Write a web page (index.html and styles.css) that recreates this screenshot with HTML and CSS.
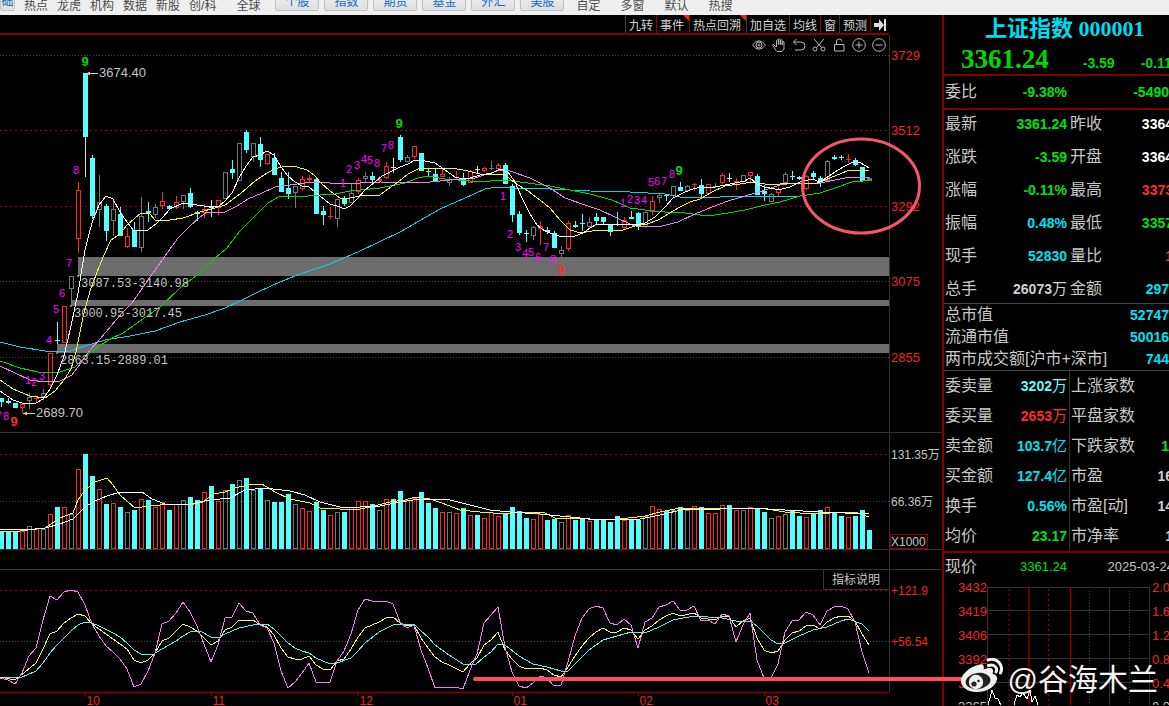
FILE: index.html
```html
<!DOCTYPE html>
<html lang="zh-CN">
<head>
<meta charset="utf-8">
<title>上证指数 000001</title>
<link rel="stylesheet" href="styles.css">
</head>
<body>
<nav class="topbar">
  <div class="links">
    <button class="tab tab-first" type="button">础</button>
    <a href="#">热点</a><a href="#">龙虎</a><a href="#">机构</a><a href="#">数据</a><a href="#">新股</a><a href="#">创/科</a>
  </div>
  <div class="links world"><a href="#">全球</a></div>
  <div class="tabs">
    <button class="tab" type="button">个股</button><button class="tab" type="button">指数</button><button class="tab" type="button">期货</button><button class="tab" type="button">基金</button><button class="tab" type="button">外汇</button><button class="tab" type="button">美股</button>
  </div>
  <div class="links wide"><a href="#">自定</a><a href="#">多窗</a><a href="#">默认</a><a href="#">热搜</a></div>
</nav>

<div class="app">
  <main class="charts">
    <div class="toolbar">
      <button type="button">九转</button>
      <button type="button" class="red flag">事件</button>
      <button type="button" class="red flag">热点回溯</button>
      <button type="button">加自选</button>
      <button type="button">均线</button>
      <button type="button" class="red">窗</button>
      <button type="button">预测</button>
      <button type="button" class="red" aria-label="收起"><svg width="12" height="12" viewBox="0 0 12 12"><path d="M0 4h5V0l5 6-5 6V8H0zM10 0h2v12h-2z" fill="#ddd"/></svg></button>
    </div>
    <section class="panel">
      <svg id="price" class="plot" viewBox="0 35 942 398"></svg>
      <div class="tools">
        <button type="button" aria-label="显示"><svg viewBox="0 0 14 14"><path d="M.5 7Q7-1.500 13.500 7 7 15.500.5 7z"/><circle cx="7" cy="7" r="3"/><circle cx="7" cy="7" r="1"/></svg></button>
        <button type="button" aria-label="拖动"><svg viewBox="0 0 14 14"><path d="M4 9 1.500 6.500Q.5 6 .8 7.500L4 12.500 5 13.500h5L12 11V4q-1-1.500-1.800 0V7 2.500q-1-1.500-1.900 0V6.500 1.500q-1-1.500-1.900 0V6.500 2.500q-1-1.500-1.900 0V9"/></svg></button>
        <button type="button" aria-label="撤销"><svg viewBox="0 0 14 14"><path d="M4.500 1 1.500 4l3 3M1.500 4h7.500a3.800 3.800 0 0 1 0 8H3"/></svg></button>
        <button type="button" aria-label="剪切"><svg viewBox="0 0 14 14"><circle cx="3" cy="11" r="2"/><circle cx="11" cy="11" r="2"/><path d="M2 1l7.500 8.500M12 1 4.500 9.500"/></svg></button>
        <button type="button" aria-label="锁定"><svg viewBox="0 0 14 14"><path d="M2.500 6.500h9.500v6.500H2.500zM4.500 6.500V3q0-2 3-2 2.500 0 2.500 2.500"/></svg></button>
        <button type="button" aria-label="放大"><svg viewBox="0 0 14 14"><circle cx="7" cy="7" r="6.300"/><path d="M3.500 7h7M7 3.500v7"/></svg></button>
        <button type="button" aria-label="缩小"><svg viewBox="0 0 14 14"><circle cx="7" cy="7" r="6.300"/><path d="M3.500 7h7"/></svg></button>
      </div>
    </section>
    <section class="panel"><svg id="volume" class="plot" viewBox="0 433 942 136"></svg></section>
    <section class="panel"><svg id="osc" class="plot" viewBox="0 569 942 137"></svg></section>
  </main>

  <aside class="quote">
    <header class="head">
      <h1>上证指数 000001</h1>
      <div class="last"><strong>3361.24</strong><span>-3.59</span><span>-0.11</span></div>
    </header>
    <div class="row ratio"><div class="cell"><span>委比</span><b class="down">-9.38%</b></div><div class="cell"><b class="down push">-5490</b></div></div>
    <div class="block spaced">
      <div class="row"><div class="cell"><span>最新</span><b class="down">3361.24</b></div><div class="cell"><span>昨收</span><b class="flat cut">3364</b></div></div>
      <div class="row"><div class="cell"><span>涨跌</span><b class="down">-3.59</b></div><div class="cell"><span>开盘</span><b class="flat cut">3364</b></div></div>
      <div class="row"><div class="cell"><span>涨幅</span><b class="down">-0.11%</b></div><div class="cell"><span>最高</span><b class="up cut">3373</b></div></div>
      <div class="row"><div class="cell"><span>振幅</span><b class="info">0.48%</b></div><div class="cell"><span>最低</span><b class="down cut">3357</b></div></div>
      <div class="row"><div class="cell"><span>现手</span><b class="info">52830</b></div><div class="cell"><span>量比</span><b class="up cut">1</b></div></div>
      <div class="row"><div class="cell"><span>总手</span><b class="plain">26073<i>万</i></b></div><div class="cell"><span>金额</span><b class="info">297</b></div></div>
    </div>
    <div class="block totals">
      <div class="row"><span>总市值</span><b class="info">52747</b></div>
      <div class="row"><span>流通市值</span><b class="info">50016</b></div>
      <div class="row"><span>两市成交额[沪市+深市]</span><b class="info">744</b></div>
    </div>
    <div class="block split">
      <div class="row"><div class="cell"><span>委卖量</span><b class="pale">3202<i>万</i></b></div><div class="cell"><span>上涨家数</span></div></div>
      <div class="row"><div class="cell"><span>委买量</span><b class="up">2653<i>万</i></b></div><div class="cell"><span>平盘家数</span></div></div>
      <div class="row"><div class="cell"><span>卖金额</span><b class="info">103.7<i>亿</i></b></div><div class="cell"><span>下跌家数</span><b class="down">1</b></div></div>
      <div class="row"><div class="cell"><span>买金额</span><b class="info">127.4<i>亿</i></b></div><div class="cell"><span>市盈</span><b class="plain cut">16</b></div></div>
      <div class="row"><div class="cell"><span>换手</span><b class="info">0.56%</b></div><div class="cell"><span>市盈[动]</span><b class="plain cut">14</b></div></div>
      <div class="row"><div class="cell"><span>均价</span><b class="down">23.17</b></div><div class="cell"><span>市净率</span><b class="plain cut">1</b></div></div>
    </div>
    <div class="row now"><div class="cell"><span>现价</span><span class="down num">3361.24</span></div><div class="cell"><span class="num push">2025-03-24</span></div></div>
    <svg id="mini" class="plot" viewBox="944 582 225 124"></svg>
  </aside>

  <div class="stroke"></div>
  <div class="watermark">
    <svg width="42" height="36" viewBox="0 0 42 36">
      <path d="M17 7C21 5 24 7 22.500 11.500 29 8.500 34 10 31.500 15.500 36 17 37 20 35.500 23 33 30 24 34.500 15 34 6 33.500 0 29 0 23 0 16 9 9 17 7z" fill="#f1f1f1"/>
      <ellipse cx="17" cy="23" rx="12.500" ry="8" fill="#222" transform="rotate(-8 17 23)"/>
      <circle cx="15" cy="24" r="7.200" fill="#f1f1f1"/>
      <circle cx="13" cy="26" r="2.600" fill="#222"/><circle cx="17.500" cy="23" r="1.300" fill="#222"/>
      <path d="M27 2C36-1 43 7 39.500 15M27.500 7.500C33 5.500 37 10 35 14" fill="none" stroke="#f1f1f1" stroke-width="3" stroke-linecap="round"/>
    </svg>
    <span>@谷海木兰</span>
  </div>
</div>
<script src="chart.js"></script>
</body>
</html>
```
FILE: styles.css
```css
* { box-sizing: border-box; }
body {
  margin: 0;
  background: #000;
  color: #c8c8c8;
  font-family: "Liberation Sans", "Noto Sans CJK SC", sans-serif;
  overflow: hidden;
}
button { font: inherit; color: inherit; background: none; border: 0; padding: 0; margin: 0; }
a { color: inherit; text-decoration: none; }
i { font-style: normal; }

.topbar {
  display: flex;
  align-items: flex-end;
  height: 15px;
  overflow: hidden;
  background: #efefef;
  color: #4c4c4c;
  font-size: 12px;
  line-height: 16px;
  white-space: nowrap;
}
.links { display: flex; align-items: flex-end; gap: 9px; height: 18px; padding-bottom: 1px; }
.world { margin-left: 20px; }
.tabs { display: flex; gap: 5px; margin-left: 15px; padding-bottom: 4px; }
.wide { gap: 20px; margin-left: 12px; }
.tab {
  width: 44px;
  height: 22px;
  padding-top: 4px;
  border: 1px solid #c2c2c2;
  border-radius: 2px;
  background: linear-gradient(#f4f4f4, #dedede);
  color: #1769c7;
}
.tab-first { width: 15px; margin-bottom: 3px; overflow: hidden; direction: rtl; }

.app { position: relative; display: flex; }
.charts { flex: 1; min-width: 0; }
.toolbar {
  display: flex;
  justify-content: flex-end;
  height: 20px;
  margin-right: 53px;
  border-bottom: 2px solid #800000;
  font-size: 12px;
  line-height: 20px;
}
.toolbar button { position: relative; padding: 1px 3px 0; border-left: 1px solid #3a3a3a; color: #d4d4d4; white-space: nowrap; }
.toolbar .red { border-left: 1px solid #900000; }
.toolbar .flag { padding-right: 5px; }
.flag::after {
  content: "";
  position: absolute;
  top: 0;
  right: 0;
  border: 3px solid transparent;
  border-top-color: #f22;
  border-right-color: #f22;
}
.toolbar svg { display: block; }
.panel { position: relative; }
.plot { display: block; width: 100%; height: auto; }
.plot polyline { shape-rendering: crispEdges; }
.tools { position: absolute; top: 0; right: 53px; display: flex; }
.tools button { display: grid; place-items: center; width: 20px; height: 20px; }
.tools svg { width: 14px; height: 14px; fill: none; stroke: #b8b8b8; stroke-width: 1; }

.plot text { font-family: "Liberation Sans", "Noto Sans CJK SC", sans-serif; font-size: 12px; fill: #c4c4c4; }
.plot text.axis { font-size: 13px; fill: #f02525; }
.plot text.axis-s { fill: #f02525; }
.plot text.tag { font-size: 13px; }
.plot text.gap { font-family: "Liberation Mono", monospace; }
.plot text.seq { font-size: 11px; fill: #f0f; text-anchor: middle; }
.plot text.nine { font-size: 13px; font-weight: bold; fill: #00d800; text-anchor: middle; }
.plot text.nine-red { font-size: 13px; font-weight: bold; fill: #ff2c2c; text-anchor: middle; }

.quote { flex: 0 0 227px; min-width: 0; overflow: hidden; border-left: 2px solid #800000; font-size: 16px; white-space: nowrap; }
.head { height: 61px; border-bottom: 2px solid #800000; }
h1 {
  margin: 0;
  padding-left: 41px;
  font: bold 22px/28px "Liberation Serif", "Noto Sans CJK SC", serif;
  color: #00dcf0;
}
.last { display: flex; align-items: baseline; gap: 34px; padding-left: 17px; font-size: 14px; font-weight: bold; line-height: 32px; color: #00d800; }
.last strong { font: bold 27px/32px "Liberation Serif", serif; }
.last span + span { margin-left: -8px; }
.row { display: flex; justify-content: space-between; line-height: 30px; padding-left: 1px; }
.cell { display: flex; flex: 1; min-width: 0; justify-content: space-between; }
.cell:first-child { flex: 0 0 122px; }
.cell + .cell { padding-left: 3px; }
.row b { font-size: 14px; }
.row b i { font-size: 15px; font-weight: normal; }
.ratio { line-height: 32px; border-bottom: 2px solid #800000; }
.block { border-bottom: 1px solid #444; }
.spaced { display: grid; gap: 5px; }
.spaced .row { line-height: 28px; }
.totals .row { line-height: 22px; }
.split { border-bottom: 2px solid #800000; }
.split .cell + .cell { margin-left: 2px; padding-left: 1px; border-left: 1px solid #333; }
.now { line-height: 28px; }
.now .num { font-size: 13px; }
.push { margin-left: auto; }
.now .push { margin-right: -5px; }
.cut { margin-right: -4px; }
.down { color: #00e010; }
.up { color: #ff2c2c; }
.info { color: #00e0f0; }
.pale { color: #60ffff; }
.flat { color: #fff; }
.plain { color: #d0d0d0; }

.stroke { position: absolute; left: 473px; right: 176px; bottom: 25px; height: 4px; background: #ff4d5e; border-radius: 12px 0 0 12px; }
.watermark { position: absolute; right: 11px; bottom: 4px; display: flex; align-items: flex-start; gap: 5px; color: #f4f4f4; font-size: 30px; line-height: 44px; white-space: nowrap; }
```
FILE: chart.js
```js
const NS = "http://www.w3.org/2000/svg";
const STEP = 7, FIRST = 1.5;

function add(svg, tag, attrs, text) {
  const el = document.createElementNS(NS, tag);
  for (const key in attrs) el.setAttribute(key, attrs[key]);
  if (text !== undefined) el.textContent = text;
  svg.appendChild(el);
}
function line(svg, x1, y1, x2, y2, stroke, dash, width) {
  add(svg, "line", { x1, y1, x2, y2, stroke, "stroke-dasharray": dash || "none", "stroke-width": width || 1 });
}
function curve(svg, stroke, points, width) {
  add(svg, "polyline", { points, stroke, fill: "none", "stroke-width": width || 1 });
}
function text(svg, x, y, cls, value) { add(svg, "text", { x, y, class: cls }, value); }

const GREY = "#333", RED = "#8c0000";
const COLORS = { c: "#54ffff", r: "#ff2626", g: "#777", w: "#ddd" };

/* Price: kind, body top, body bottom, high, low */
const candles = `c398,402,398,407 c401,403,398,404 c403,408,403,408 r404,408,404,413 g397,401,393,409 r398,399,396,402 g393,397,389,400
r353,385,353,387 c340,341,322,344 r306,343,306,343 g276,289,276,306 r190,239,182,253 c73,137,73,177 c158,216,155,219 g202,210,175,227
c206,231,204,241 g209,221,201,236 c214,236,207,236 r236,247,228,248 c230,247,222,247 g216,248,197,252 c211,213,202,222 g207,215,204,218
r201,206,192,209 c206,209,205,210 r202,208,196,209 g195,202,195,209 c193,207,188,208 c212,214,211,221 r209,213,204,218 w207,208,200,217
r200,208,200,215 g172,199,172,199 c169,173,160,179 g143,181,143,181 c132,150,130,153 g143,157,143,162 c144,160,137,167 r154,164,154,165
c158,175,153,175 c178,192,172,192 c188,194,172,199 g186,193,186,208 r179,189,176,191 r178,180,175,182 c179,214,178,214 c211,215,206,225
r216,217,207,219 g199,219,199,227 c199,204,196,206 g193,203,183,203 r180,192,178,194 g176,179,172,182 c176,180,172,183 r179,181,176,183
r166,178,162,179 w167,168,158,173 c137,160,135,162 g157,162,155,162 r146,157,146,159 c153,171,153,171 c171,172,168,176 c174,181,169,182
r174,177,169,177 g179,183,177,186 r177,178,171,180 c179,185,173,186 r171,183,170,183 w169,170,166,173 r168,171,167,172 g168,169,161,170
r165,169,163,170 c165,184,163,184 c186,215,184,222 c214,233,211,235 c233,234,230,242 g227,236,226,240 r226,229,221,245 c230,232,227,234
c233,248,231,248 g250,254,246,257 r223,249,221,251 c225,227,221,228 c223,224,214,231 g222,227,217,228 c217,221,213,225 c217,222,217,225
c225,232,224,236 c224,225,212,226 r220,228,217,229 c217,219,211,219 c213,227,212,230 g212,227,212,228 r201,212,196,215 g195,198,194,203
c195,196,194,201 g186,196,186,197 c187,191,182,191 g186,191,185,192 r184,185,183,191 c185,194,179,197 r184,194,184,195 g186,187,183,188
r175,183,173,184 w178,179,173,182 r181,183,178,190 g175,182,175,182 r172,176,172,182 c176,195,174,195 c191,194,185,201 g194,202,193,202
r189,193,187,197 g174,183,172,183 c176,177,171,180 c177,179,176,180 r176,189,175,190 c173,177,171,179 c178,183,176,187 g161,181,160,182
c157,159,155,160 c157,158,155,160 r159,160,154,163 c160,165,158,166 c167,181,167,182 g178,180,177,181`.split(/\s+/);

const price = document.getElementById("price");
[[55.5, 0], [130.5, 1], [206.5, 1], [281.5, 0], [357.5, 0]].forEach(([y, red]) =>
  line(price, 0, y, 889, y, red ? "#a00000" : "#444", red ? "2 3" : "1 2"));
line(price, 889.5, 35, 889.5, 433, GREY);
line(price, 0, 432.5, 942, 432.5, GREY);
[[78, 257, 19], [72, 300, 6], [57, 344, 9]].forEach(([x, y, h]) =>
  add(price, "rect", { x, y, width: 889 - x, height: h, fill: "#6d6d6d" }));
candles.forEach((item, i) => {
  const kind = item[0], color = COLORS[kind], x = FIRST + i * STEP;
  const [top, bottom, high, low] = item.slice(1).split(",").map(Number);
  if (bottom - top <= 1 || kind === "c") {
    line(price, x, high, x, low, bottom - top > 60 ? "#ddd" : color);
    add(price, "rect", { x: x - 2.5, y: top, width: 5, height: Math.max(1, bottom - top), fill: color });
  } else {
    line(price, x, high, x, top, color);
    line(price, x, bottom, x, low, color);
    add(price, "rect", { x: x - 2, y: top + 0.5, width: 4, height: bottom - top - 1, fill: "none", stroke: color });
  }
});
curve(price, "#00d5e8", "0,342 20,347 45,351 70,351 85,346 105,340 130,336 155,331 180,322 205,315 225,308 240,301 260,291 280,282 300,274 330,264 360,251 400,232 440,209 465,198 485,189 497,187 510,188 550,189 590,191 630,192 665,194 680,197 720,197 800,196 869,196");
curve(price, "#00d800", "0,361 20,368 38,372 60,372 75,367 85,357 95,349 110,339 123,333 140,321 160,307 180,288 200,273 215,258 226,249 240,231 256,215 268,203 280,196 297,197 320,195 335,194 350,191 380,188 405,183 418,178 428,176 445,179 470,181 490,181 505,180 520,182 550,186 570,190 590,194 612,200 630,208 645,210 665,212 685,213 700,215 715,215 728,213 745,210 765,205 780,202 800,196 820,193 838,187 852,182 872,180");
curve(price, "#f080f0", "0,366 15,373 30,380 45,382 60,381 72,375 78,367 90,350 100,339 111,326 122,313 132,303 141,290 155,270 165,256 178,238 190,226 200,217 207,212 225,212 237,206 248,199 262,193 275,187 290,185 305,183 320,182 340,184 380,182 420,183 450,180 475,178 500,170 510,171 530,178 550,188 565,198 585,205 600,210 615,217 632,225 647,227 662,226 678,222 695,214 712,207 728,201 745,196 765,190 780,185 795,183 820,183 835,180 850,177 869,177");
curve(price, "#f4f430", "0,380 13,389 30,396 45,398 55,391 64,380 71,369 76,352 83,317 90,291 97,272 104,255 111,240 120,234 127,225 134,219 141,213 150,214 155,220 170,220 183,218 200,212 215,208 225,205 240,194 255,181 267,173 275,169 285,166 297,167 307,170 314,175 321,183 330,191 340,198 350,198 365,195 380,195 388,189 398,182 408,174 418,169 430,168 452,168 468,171 480,174 505,175 515,183 528,191 540,200 550,208 560,220 570,230 581,233 597,230 620,231 635,226 647,224 658,220 670,213 680,207 690,202 700,199 712,192 725,186 740,184 752,182 765,184 780,184 800,183 815,184 830,178 847,171 869,170");
curve(price, "#fff", "0,391 13,400 22,403 30,404 36,403 43,399 50,389 57,375 64,356 71,326 78,293 85,250 90,230 93,220 99,205 106,196 113,199 120,212 127,222 134,231 141,230 148,230 156,224 162,218 170,209 183,203 204,206 218,207 225,201 232,193 239,178 246,166 253,157 260,155 267,151 274,155 281,167 288,176 295,182 302,186 309,187 320,196 330,204 340,207 344,209 350,206 357,199 365,190 375,182 382,176 390,172 400,167 408,164 415,160 425,161 435,163 445,170 455,177 463,179 470,178 480,175 492,173 500,169 508,172 515,182 522,198 530,214 537,225 545,231 553,234 562,237 575,236 583,233 590,228 597,224 610,225 625,224 635,225 645,223 655,217 665,207 673,198 683,193 690,190 700,187 715,187 730,184 745,181 750,178 757,184 764,187 775,189 782,189 790,187 800,182 812,179 820,182 829,176 838,170 847,165 855,161 861,163 869,168");

[[6, 420, 8], [28, 384, 1], [34, 386, 2], [42, 380, 3], [49, 344, 4], [56, 313, 5], [62, 297, 6], [69, 267, 7], [76, 174, 8],
 [343, 187, 1], [349, 173, 2], [357, 169, 3], [364, 163, 4], [370, 164, 5], [377, 167, 8], [384, 152, 7], [391, 149, 8],
 [503, 200, 1], [510, 238, 2], [518, 251, 3], [525, 257, 4], [531, 256, 5], [538, 261, 6], [546, 251, 7], [553, 263, 8],
 [623, 207, 1], [630, 203, 2], [637, 204, 3], [644, 204, 4], [651, 186, 5], [657, 185, 6], [664, 185, 7], [672, 178, 8]
].forEach(([x, y, n]) => text(price, x, y, "seq", n));
[[85, 66], [399, 128], [679, 175]].forEach(([x, y]) => text(price, x, y, "nine", 9));
[[14, 426], [561, 274]].forEach(([x, y]) => text(price, x, y, "nine-red", 9));
text(price, 0, 419, "seq", "*");

text(price, 81, 287, "gap", "3087.53-3140.98");
text(price, 74, 317, "gap", "3000.95-3017.45");
text(price, 60, 364, "gap", "2863.15-2889.01");
text(price, 99, 77, "tag", "3674.40");
text(price, 36, 417, "tag", "2689.70");
[[86, 73.5], [23, 413.5]].forEach(([x, y]) => {
  line(price, x, y, x + 12, y, "#ccc");
  add(price, "path", { d: `M${x} ${y}l4-2v4z`, fill: "#ccc" });
});
[[78, 276], [71, 306], [57, 353]].forEach(([cx, cy]) => add(price, "circle", { cx, cy, r: 1, fill: "#f88" }));
[[60, 3729], [135, 3512], [211, 3292], [286, 3075], [362, 2855]].forEach(([y, v]) => text(price, 891, y, "axis", v));
add(price, "ellipse", { cx: 861, cy: 186, rx: 58.5, ry: 47, fill: "none", stroke: "#f4566a", "stroke-width": 3 });

/* Volume: kind and bar height */
const bars = `c18 c18 c18 r18 g23 r21 g20 r35 c42 r42 g35 r80 c95 c73 r60 c45 r46 c42 g37 c39 r50 c49 r42 r47 c39 r45 g49 c52 c49 r57 c63 r48 g59 c65 g69 c71 g59 c60 g49 c47 c47 c55 g45 r41 r38 c47 c39 r34 g37 c37 r42 r48 r48 c45 g39 r50 c50 c58 g49 r51 c57 c46 c41 r37 g37 r36 c41 r34 c34 r31 r37 r33 c36 c42 c38 c31 r30 r35 c29 c30 g27 r34 c29 c30 r28 c30 c29 c27 c33 r29 c30 c29 g33 r43 r40 c38 g39 c42 g39 r43 c42 r36 r36 r44 c44 r39 g39 r42 c41 c37 g31 r33 g35 c39 c33 r32 c36 c39 r42 c36 c33 r32 c33 c39 c19`.split(" ");
const volume = document.getElementById("volume");
line(volume, 0, 454.5, 889, 454.5, "#a00000", "2 3");
line(volume, 0, 501.5, 889, 501.5, "#444", "1 2");
bars.forEach((item, i) => {
  const kind = item[0], h = Number(item.slice(1)), x = FIRST + i * STEP;
  if (kind === "c") add(volume, "rect", { x: x - 2.5, y: 549 - h, width: 5, height: h, fill: COLORS.c });
  else add(volume, "rect", { x: x - 2, y: 549.5 - h, width: 4, height: h - 1, fill: "none", stroke: COLORS[kind] });
});
curve(volume, "#f4f430", "0,531 20,531 45,528 60,518 73,513 78,500 85,490 95,482 107,478 113,485 120,495 135,508 150,506 170,504 190,505 203,502 213,494 225,492 235,488 248,485 262,484 275,492 290,499 310,503 320,508 340,509 355,510 370,507 390,502 405,500 415,497 430,499 442,503 460,510 480,512 505,514 520,512 545,513 555,518 575,518 600,520 620,519 645,516 660,512 680,508 700,508 730,508 760,508 785,512 800,513 830,513 855,512 869,517");
curve(volume, "#fff", "0,529 25,530 45,528 60,524 73,519 85,507 95,501 107,496 120,492 142,492 152,499 165,504 190,504 210,500 230,498 245,490 265,488 290,491 305,495 320,502 340,507 360,507 380,506 400,502 420,499 450,500 470,505 490,510 510,512 540,514 560,516 590,519 640,519 660,515 685,509 720,509 750,508 785,510 820,512 869,514");
line(volume, 0, 549.5, 942, 549.5, GREY);
line(volume, 889.5, 433, 889.5, 569, GREY);
text(volume, 891, 459, "", "131.35万");
text(volume, 891, 506, "", "66.36万");
add(volume, "rect", { x: 890.5, y: 534.5, width: 37, height: 14, fill: "#000", stroke: "#900000" });
text(volume, 891, 546, "", "X1000");

/* Oscillator */
const osc = document.getElementById("osc");
line(osc, 0, 569.5, 942, 569.5, GREY);
line(osc, 0, 590.5, 889, 590.5, "#a00000", "2 3");
line(osc, 0, 641.5, 889, 641.5, "#444", "1 2");
line(osc, 889.5, 569, 889.5, 692, GREY);
curve(osc, "#60f0f0", "0,677 20,678 36,671 43,663 50,653 57,645 64,638 71,631 78,625 85,622 92,623 99,626 113,633 120,637 127,643 134,650 141,654 152,655 162,649 176,641 183,636 190,632 200,631 211,637 218,638 225,634 239,628 253,625 267,624 274,629 281,636 288,643 295,648 302,651 309,653 316,658 330,664 337,663 351,658 358,651 365,643 379,632 393,625 414,624 421,631 428,637 435,645 449,655 463,664 475,665 484,657 491,652 498,644 505,645 519,656 533,664 547,667 561,671 568,671 575,664 589,650 603,640 617,636 631,632 645,633 659,627 673,620 694,616 722,618 736,621 750,621 757,626 764,633 771,640 778,644 785,643 799,636 813,630 827,627 841,621 848,619 862,624 869,631");
curve(osc, "#f0f080", "0,677 15,680 25,672 36,663 43,649 50,634 57,631 64,623 71,618 78,614 85,616 92,624 106,634 120,644 127,649 134,660 141,663 148,660 155,653 162,641 169,638 176,631 183,624 190,627 197,631 204,638 211,645 218,641 225,630 232,627 239,620 246,621 253,620 260,625 267,627 274,635 281,648 288,657 295,659 302,659 309,656 316,665 323,669 330,670 337,661 344,659 351,649 358,637 365,628 372,625 379,622 386,618 393,617 400,623 407,626 414,625 421,638 428,648 435,657 442,662 449,665 463,672 470,664 477,658 484,645 491,640 498,632 505,650 512,659 519,666 526,669 540,668 547,670 554,675 561,677 568,667 575,656 582,646 589,638 596,632 603,628 610,632 617,632 624,628 631,630 638,639 645,630 652,626 659,620 666,616 673,613 680,616 694,613 701,618 715,620 722,616 729,617 736,627 743,621 750,618 757,638 764,650 771,653 778,651 785,640 792,633 799,631 806,626 813,625 820,629 827,622 834,618 841,616 848,616 855,621 862,634 869,645");
curve(osc, "#f080f0", "0,678 8,680 15,684 22,673 29,656 36,648 43,620 50,596 57,600 64,592 71,590 78,592 85,605 92,624 99,636 106,646 113,652 120,659 127,669 134,687 141,684 148,671 155,653 162,624 169,621 176,613 183,602 190,612 197,626 204,644 211,662 218,645 225,618 232,617 239,603 246,611 253,613 260,625 267,628 274,643 281,671 288,688 295,682 302,673 309,663 316,682 330,682 337,661 344,651 351,634 358,610 365,599 372,601 386,601 393,604 400,622 407,628 414,625 421,650 428,668 435,688 449,687 455,687 463,689 470,670 477,654 484,623 491,615 498,607 505,647 512,672 519,686 526,688 533,683 540,676 547,678 554,686 561,685 568,662 575,636 582,618 589,609 596,606 603,608 610,623 617,625 624,619 631,625 638,648 645,622 652,618 659,607 666,605 673,601 680,610 687,610 694,606 701,621 708,620 715,624 722,614 729,616 736,642 743,625 750,613 757,660 764,678 771,678 778,664 785,632 792,621 799,620 806,612 813,615 820,625 827,611 834,607 841,606 848,609 855,622 862,652 869,673");
add(osc, "rect", { x: 823.5, y: 569.5, width: 66, height: 20, fill: "#000", stroke: GREY });
text(osc, 832, 584, "", "指标说明");
line(osc, 0, 692.5, 889, 692.5, RED, "", 1.5);
[[85.5, "10"], [211.5, "11"], [358.5, "12"], [512.5, "01"], [638.5, "02"], [764.5, "03"]].forEach(([x, m]) => {
  line(osc, x, 693, x, 696, RED);
  text(osc, x + 1, 705, "axis-s", m);
});
text(osc, 891, 595, "axis-s", "+121.9");
text(osc, 891, 646, "axis-s", "+56.54");

/* Intraday */
const mini = document.getElementById("mini");
[588.5, 611.5, 635.5, 659.5, 683.5].forEach(y => line(mini, 987, y, 1149, y, GREY));
[987.5, 1109.5, 1149.5].forEach(x => line(mini, x, 588, x, 706, GREY));
[1089.5, 1129.5].forEach(x => line(mini, x, 592, x, 706, "#444", "1 2"));
[1009, 1048.5].forEach(x => line(mini, x, 590, x, 706, "#a00000", "2 3"));
[1029, 1070.5].forEach(x => line(mini, x, 588, x, 706, RED, "", 1.5));
[[3432, "2.0"], [3419, "1.6"], [3406, "1.2"], [3392, "0.8"], [3379, "0.4"]].forEach(([v, pct], i) => {
  text(mini, 958, 593 + i * 24, "axis", v);
  text(mini, 1152, 593 + i * 24, "axis", pct);
});
text(mini, 958, 712, "tag", "3365");
text(mini, 1152, 712, "tag", "0.0");
curve(mini, "#fff", "988,706 991,695 992,691 995,699 998,700 1002,709");
curve(mini, "#fff", "1013,709 1017,696 1020,698 1023,694 1027,700 1030,691 1032,703 1035,697 1038,706");
```
